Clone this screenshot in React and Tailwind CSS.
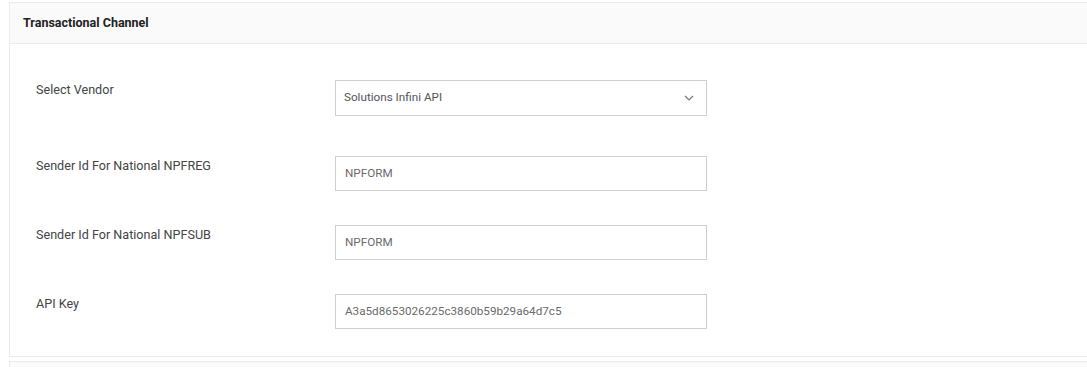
import React from "react";

const font = { fontFamily: "Roboto, 'Liberation Sans', sans-serif" };

function Row({ label, value, select, top }) {
    return (
        <div className={"flex items-start " + top}>
            <div className="w-[325px] pt-px pl-[26px] text-[12.6px] leading-[18px] text-[#444]">{label}</div>
            {select ? (
                <div className="w-[372px] h-[36px] border border-[#cfcfcf] bg-white flex items-center justify-between pl-[8px] pr-[12px] text-[11.7px] text-[#555]">
                    <span>{value}</span>
                    <svg width="10" height="6" viewBox="0 0 10 6" fill="none">
                        <path d="M1 1l4 4 4-4" stroke="#777" strokeWidth="1.2" />
                    </svg>
                </div>
            ) : (
                <div className="w-[372px] h-[35px] border border-[#cfcfcf] bg-white flex items-center pl-[9px] text-[11.7px] text-[#6a6a6a]">
                    {value}
                </div>
            )}
        </div>
    );
}

export default function App() {
    return (
        <div className="w-[1087px] h-[367px] overflow-hidden bg-white" style={font}>
            <div className="ml-[9px] mt-[2px] w-[1090px] border border-[#ebebeb] bg-white">
                {/* header */}
                <div className="h-[41px] bg-[#fafafa] border-b border-[#ebebeb] flex items-center pl-[13px] text-[12.5px] font-bold text-[#222]">
                    Transactional Channel
                </div>
                {/* form */}
                <div className="pt-[36px] pb-[27px]">
                    <Row label="Select Vendor" value="Solutions Infini API" select top="" />
                    <Row label="Sender Id For National NPFREG" value="NPFORM" top="mt-[40px]" />
                    <Row label="Sender Id For National NPFSUB" value="NPFORM" top="mt-[34px]" />
                    <Row label="API Key" value="A3a5d8653026225c3860b59b29a64d7c5" top="mt-[34px]" />
                </div>
            </div>
            <div className="ml-[9px] mt-[4px] w-[1090px] h-[20px] border border-[#ebebeb] bg-[#fafafa]"></div>
        </div>
    );
}
